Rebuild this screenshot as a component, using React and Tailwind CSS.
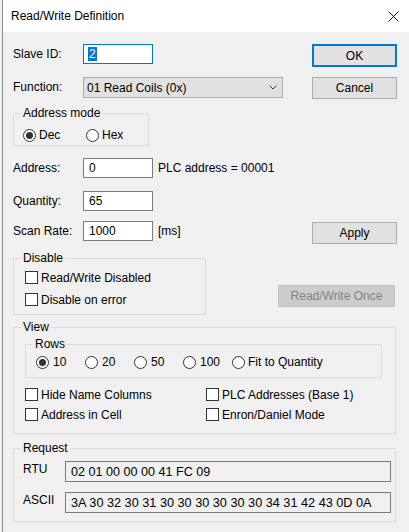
import React from "react"

function Radio({ checked }) {
  return (
    <span className="w-[13px] h-[13px] rounded-full border border-[#333333] bg-white flex items-center justify-center shrink-0">
      {checked && <span className="w-[7px] h-[7px] rounded-full bg-[#333333]" />}
    </span>
  )
}

function Check({ label }) {
  return (
    <div className="flex items-center h-[13px] gap-[3px]">
      <span className="w-[13px] h-[13px] border border-[#333333] bg-white shrink-0" />
      <span className="leading-[14px] whitespace-nowrap">{label}</span>
    </div>
  )
}

function GroupBox({ label, className, children }) {
  return (
    <div className={"relative border border-[#dcdcdc] " + className}>
      <span className="absolute -top-[8px] left-[7px] px-[2px] bg-[#f0f0f0] leading-[14px]">{label}</span>
      {children}
    </div>
  )
}

function Button({ children, primary, disabled, className = "" }) {
  let look = "border border-[#adadad] bg-[#e1e1e1] text-black"
  if (primary) look = "border-2 border-[#0078d7] bg-[#e1e1e1] text-black"
  if (disabled) look = "border border-[#bfbfbf] bg-[#cccccc] text-[#838383]"
  return <div className={"flex items-center justify-center shrink-0 " + look + " " + className}>{children}</div>
}

function TextBox({ value, className = "" }) {
  return (
    <div className={"w-[70px] h-[20px] border border-[#7a7a7a] bg-white pl-[5px] flex items-center leading-[14px] " + className}>
      {value}
    </div>
  )
}

export default function App() {
  return (
    <div className="w-[409px] h-[532px] overflow-hidden bg-[#f0f0f0] pl-[2px] text-[12px] text-black font-['Liberation_Sans',Arial,sans-serif]">
      <div className="h-full border-l border-[#8c8c8c] flex flex-col">
        {/* title bar */}
        <div className="h-[32px] bg-white flex items-center pl-[8px] shrink-0">
          <span className="leading-[14px]">Read/Write Definition</span>
          <svg className="ml-auto mr-[10px]" width="11" height="11" viewBox="0 0 11 11">
            <path d="M0.5 0.5 L10.5 10.5 M10.5 0.5 L0.5 10.5" stroke="#111" strokeWidth="1" />
          </svg>
        </div>

        <div className="flex-1 flex flex-col pl-[10px] pt-[12px] w-[394px]">
          {/* Slave ID */}
          <div className="flex items-start h-[23px]">
            <span className="w-[70px] leading-[20px]">Slave ID:</span>
            <div className="w-[70px] h-[20px] border border-[#0078d7] bg-white pl-[5px] flex items-center">
              <span className="bg-[#0078d7] text-white leading-[14px] px-[1px] -ml-[1px]">2</span>
            </div>
            <Button primary className="ml-auto w-[85px] h-[23px]">OK</Button>
          </div>

          {/* Function */}
          <div className="flex items-start h-[22px] mt-[10px]">
            <span className="w-[70px] leading-[21px]">Function:</span>
            <div className="w-[200px] h-[21px] border border-[#adadad] bg-[#e1e1e1] pl-[3px] pr-[5px] flex items-center justify-between">
              <span className="leading-[14px]">01 Read Coils (0x)</span>
              <svg width="8" height="5" viewBox="0 0 8 5">
                <path d="M0.5 0.5 L4 4 L7.5 0.5" stroke="#333" strokeWidth="1" fill="none" />
              </svg>
            </div>
            <Button className="ml-auto w-[85px] h-[22px]">Cancel</Button>
          </div>

          {/* Address mode */}
          <GroupBox label="Address mode" className="mt-[14px] w-[136px] h-[33px] pl-[9px] pt-[14px]">
            <div className="flex items-center">
              <div className="flex items-center gap-[3px] w-[63px]">
                <Radio checked />
                <span className="leading-[14px]">Dec</span>
              </div>
              <div className="flex items-center gap-[3px]">
                <Radio />
                <span className="leading-[14px]">Hex</span>
              </div>
            </div>
          </GroupBox>

          {/* Address */}
          <div className="flex items-center h-[20px] mt-[12px]">
            <span className="w-[70px] leading-[14px]">Address:</span>
            <TextBox value="0" />
            <span className="ml-[5px] leading-[14px]">PLC address = 00001</span>
          </div>

          {/* Quantity */}
          <div className="flex items-center h-[20px] mt-[13px]">
            <span className="w-[70px] leading-[14px]">Quantity:</span>
            <TextBox value="65" />
          </div>

          {/* Scan rate */}
          <div className="flex items-start h-[23px] mt-[10px]">
            <span className="w-[70px] leading-[20px]">Scan Rate:</span>
            <TextBox value="1000" />
            <span className="ml-[5px] leading-[20px]">[ms]</span>
            <Button className="ml-auto mt-[1px] w-[85px] h-[22px]">Apply</Button>
          </div>

          {/* Disable */}
          <div className="flex items-start mt-[14px]">
            <GroupBox label="Disable" className="w-[193px] h-[57px] pl-[11px] pt-[12px]">
              <div className="flex flex-col gap-[9px]">
                <Check label="Read/Write Disabled" />
                <Check label="Disable on error" />
              </div>
            </GroupBox>
            <Button disabled className="ml-auto mr-[2px] mt-[27px] w-[117px] h-[22px]">Read/Write Once</Button>
          </div>

          {/* View */}
          <GroupBox label="View" className="mt-[12px] w-[383px] h-[107px] pl-[11px] pt-[16px]">
            <GroupBox label="Rows" className="w-[357px] h-[34px] pl-[10px] pt-[10px]">
              <div className="flex items-center">
                {["10", "20", "50", "100"].map((r, i) => (
                  <div key={r} className="flex items-center gap-[4px] w-[49px]">
                    <Radio checked={i === 0} />
                    <span className="leading-[14px]">{r}</span>
                  </div>
                ))}
                <div className="flex items-center gap-[3px]">
                  <Radio />
                  <span className="leading-[14px]">Fit to Quantity</span>
                </div>
              </div>
            </GroupBox>
            <div className="grid grid-cols-[181px_1fr] gap-y-[7px] mt-[10px]">
              <Check label="Hide Name Columns" />
              <Check label="PLC Addresses (Base 1)" />
              <Check label="Address in Cell" />
              <Check label="Enron/Daniel Mode" />
            </div>
          </GroupBox>

          {/* Request */}
          <GroupBox label="Request" className="mt-[14px] w-[383px] h-[74px] pl-[9px] pt-[12px]">
            <div className="flex items-start">
              <span className="w-[42px] leading-[16px]">RTU</span>
              <div className="w-[326px] h-[21px] border border-[#7a7a7a] bg-[#f0f0f0] pl-[5px] flex items-center text-[12.6px] leading-[14px]">
                02 01 00 00 00 41 FC 09
              </div>
            </div>
            <div className="flex items-start mt-[10px]">
              <span className="w-[42px] leading-[16px]">ASCII</span>
              <div className="w-[326px] h-[21px] border border-[#7a7a7a] bg-[#f0f0f0] pl-[5px] flex items-center text-[12.7px] leading-[14px] whitespace-nowrap">
                3A 30 32 30 31 30 30 30 30 30 30 34 31 42 43 0D 0A
              </div>
            </div>
          </GroupBox>
        </div>
      </div>
    </div>
  )
}
